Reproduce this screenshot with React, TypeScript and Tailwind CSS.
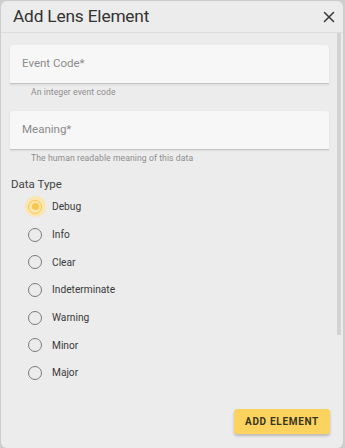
import { X } from 'lucide-react';

const DATA_TYPES = ['Debug', 'Info', 'Clear', 'Indeterminate', 'Warning', 'Minor', 'Major'];

function FilledField({ label, helper }: { label: string; helper: string }) {
  return (
    <div className="flex flex-col">
      <div className="flex h-[39px] items-center rounded-t-[4px] border-b border-[#c4c4c4] bg-[#f7f7f7] pl-[12px] shadow-[0_1px_2px_rgba(0,0,0,0.08)]">
        <span className="text-[11.5px] text-[#8b8b8b]">{label}</span>
      </div>
      <div className="flex h-[16px] items-center pl-[21px] text-[8.6px] tracking-[0.01em] text-[#8e8e8e]">{helper}</div>
    </div>
  );
}

function Radio({ label, checked }: { label: string; checked?: boolean }) {
  return (
    <div className="flex h-[27.7px] items-center">
      <div className="ml-[8px] flex w-[34px] justify-center">
        {checked ? (
          <span className="flex h-[21px] w-[21px] items-center justify-center rounded-full bg-[#fbe6b0]">
            <span className="flex h-[14px] w-[14px] items-center justify-center rounded-full border-[1.5px] border-[#f8c64c]">
              <span className="h-[7px] w-[7px] rounded-full bg-[#f8c64c]" />
            </span>
          </span>
        ) : (
          <span className="h-[14px] w-[14px] rounded-full border-[1.5px] border-[#7a7a7a]" />
        )}
      </div>
      <span className="text-[10.2px] text-[#3a3a3a]">{label}</span>
    </div>
  );
}

export default function App() {
  return (
    <div className="h-[448px] w-[345px] bg-[#cdcdcd] pl-[1px] pr-[2px] pt-[1px] font-['Roboto',sans-serif]">
      <div className="flex h-full flex-col overflow-hidden rounded-[6px] bg-[#ececec]">
        <header className="flex h-[32px] shrink-0 items-center justify-between border-b border-[#dcdcdc] pl-[12px] pr-[5px]">
          <h1 className="text-[17.3px] leading-none tracking-[-0.01em] text-[#333333]">Add Lens Element</h1>
          <X className="h-[18px] w-[18px] text-[#3a3a3a]" strokeWidth={2} />
        </header>
        <div className="flex flex-1">
          <div className="flex flex-1 flex-col pl-[9px] pr-[7px] pt-[12px]">
            <div className="flex flex-col gap-[11px]">
              <FilledField label="Event Code*" helper="An integer event code" />
              <FilledField label="Meaning*" helper="The human readable meaning of this data" />
            </div>
            <div className="mt-[9px] pl-[1px] text-[11.5px] leading-[18px] text-[#444444]">Data Type</div>
            <div className="flex flex-col">
              {DATA_TYPES.map((t, i) => (
                <Radio key={t} label={t} checked={i === 0} />
              ))}
            </div>
          </div>
          <div className="w-[7px] shrink-0">
            <div className="ml-[1px] h-[302px] w-[4px] bg-[#d3d3d3]" />
          </div>
        </div>
        <div className="flex justify-end pb-[14px] pr-[13px]">
          <button className="h-[25px] w-[96px] rounded-[3px] bg-[#fdd35f] text-[10px] font-bold tracking-[0.07em] text-[#37361f] shadow-[0_2px_3px_rgba(0,0,0,0.22)]">
            ADD ELEMENT
          </button>
        </div>
      </div>
    </div>
  );
}
